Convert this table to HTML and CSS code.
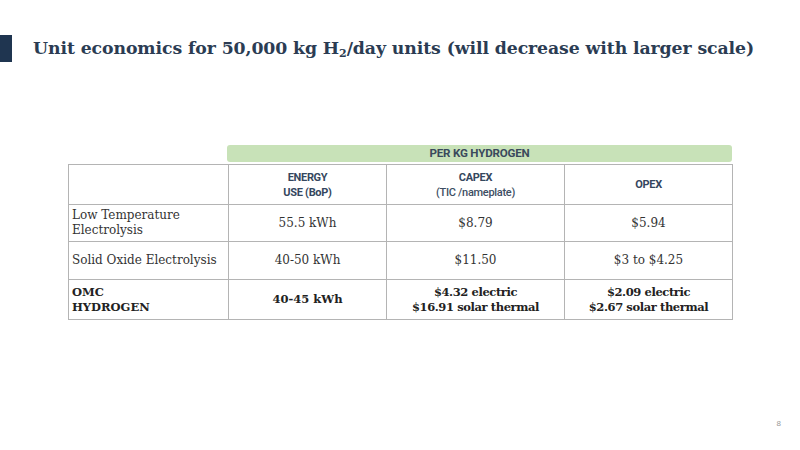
FILE: index.html
```html
<!DOCTYPE html>
<html>
<head>
<meta charset="utf-8">
<link rel="stylesheet" href="styles.css">
</head>
<body>
<div class="slide">
  <header class="title-row">
    <div class="accent"></div>
    <h1 class="title">Unit economics for 50,000 kg H<sub>2</sub>/day units (will decrease with larger scale)</h1>
  </header>
  <section class="table-wrap">
    <div class="band-row">
      <div class="band-spacer"></div>
      <div class="band">PER KG HYDROGEN</div>
    </div>
    <table class="econ">
      <colgroup>
        <col class="c1"><col class="c2"><col class="c3"><col class="c4">
      </colgroup>
      <tr class="head">
        <td></td>
        <th>ENERGY<br>USE (BoP)</th>
        <th>CAPEX<br><span class="light">(TIC /nameplate)</span></th>
        <th>OPEX</th>
      </tr>
      <tr class="r1">
        <td class="label">Low Temperature Electrolysis</td>
        <td>55.5 kWh</td>
        <td>$8.79</td>
        <td>$5.94</td>
      </tr>
      <tr class="r2">
        <td class="label">Solid Oxide Electrolysis</td>
        <td>40-50 kWh</td>
        <td>$11.50</td>
        <td>$3 to $4.25</td>
      </tr>
      <tr class="r3 bold">
        <td class="label">OMC<br>HYDROGEN</td>
        <td>40-45 kWh</td>
        <td class="tight">$4.32 electric<br>$16.91 solar thermal</td>
        <td class="tight">$2.09 electric<br>$2.67 solar thermal</td>
      </tr>
    </table>
  </section>
  <div class="page-num">8</div>
</div>
</body>
</html>
```
FILE: styles.css
```css
* { box-sizing: border-box; }
html, body { margin: 0; padding: 0; background: #fff; }
.slide {
  width: 800px;
  height: 450px;
  position: relative;
  overflow: hidden;
  font-family: "DejaVu Serif", serif;
  color: #333;
}
.title-row {
  display: flex;
  align-items: center;
  padding-top: 35px;
  height: 62px;
}
.accent {
  width: 12px;
  height: 27px;
  background: #1f3550;
  flex: none;
}
.title {
  margin: 0 0 0 21px;
  font-size: 17.3px;
  font-weight: bold;
  color: #2b3c53;
  white-space: nowrap;
  letter-spacing: -0.1px;
  line-height: 27px;
}
.title sub {
  font-size: 11px;
  vertical-align: -3px;
  line-height: 0;
}
.table-wrap {
  margin: 83px 0 0 68px;
  width: 664px;
}
.band-row {
  display: flex;
  height: 19px;
}
.band-spacer { width: 159px; flex: none; }
.band {
  flex: 1;
  height: 17px;
  background: #c8e2b8;
  border-radius: 3px;
  font-family: "Roboto", sans-serif;
  font-weight: bold;
  font-size: 11.6px;
  letter-spacing: -0.2px;
  color: #3a4a5c;
  text-align: center;
  line-height: 17px;
}
.econ {
  width: 664px;
  border-collapse: collapse;
  table-layout: fixed;
}
.c1 { width: 160px; }
.c2 { width: 158px; }
.c3 { width: 178px; }
.c4 { width: 168px; }
.econ td, .econ th {
  border: 1px solid #b4b4b4;
  text-align: center;
  vertical-align: middle;
  padding: 0 4px;
}
.econ th {
  font-family: "Roboto", sans-serif;
  font-weight: bold;
  font-size: 11px;
  letter-spacing: -0.3px;
  color: #35475e;
  line-height: 15px;
}
.econ th .light { font-weight: 500; color: #3d4e63; }
.head { height: 40px; }
.r1 { height: 37px; }
.r2 { height: 38px; }
.r3 { height: 40px; }
.econ td {
  font-size: 12px;
  color: #333;
  line-height: 15px;
}
.econ td.label {
  text-align: left;
  padding-left: 3px;
}
.bold td {
  font-weight: bold;
  color: #222;
  font-size: 11.5px;
  line-height: 15px;
}
.bold td.tight { letter-spacing: -0.4px; }
.page-num {
  position: absolute;
  right: 19px;
  top: 419px;
  font-family: "Liberation Sans", sans-serif;
  font-size: 8px;
  color: #999;
}
```
